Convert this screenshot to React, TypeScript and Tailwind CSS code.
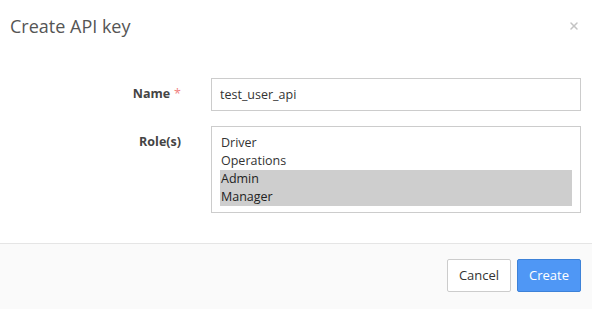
import { X } from 'lucide-react'

const roles = [
  { name: 'Driver', selected: false },
  { name: 'Operations', selected: false },
  { name: 'Admin', selected: true },
  { name: 'Manager', selected: true },
]

export default function App() {
  return (
    <div className="flex h-[309px] w-[592px] flex-col bg-white font-['Open_Sans',sans-serif] text-[#333]">
      <div className="flex h-[52px] items-center justify-between pl-[10px] pr-[12px]">
        <h2 className="text-[18px] font-normal text-[#555]">Create API key</h2>
        <X size={12} strokeWidth={3} className="text-[#c4c4c4]" />
      </div>

      <div className="grid flex-1 grid-cols-[181px_370px] content-start gap-x-[30px] gap-y-[15px] pt-[26px]">
        <label className="flex h-[33px] items-center justify-end text-[12.5px] font-bold text-[#444]">
          Name <span className="ml-[4px] font-normal text-[#f08080]">*</span>
        </label>
        <input
          readOnly
          value="test_user_api"
          className="h-[33px] border border-[#ccc] px-[8px] text-[12.5px] text-[#333] outline-none"
        />

        <label className="pt-[7px] text-right text-[12.5px] font-bold text-[#444]">Role(s)</label>
        <div className="h-[87px] border border-[#ccc] px-[8px] pt-[7px]">
          {roles.map((role) => (
            <div
              key={role.name}
              className={`h-[18px] pl-[1px] text-[12.5px] leading-[18px] ${role.selected ? 'bg-[#cecece] text-[#222]' : ''}`}
            >
              {role.name}
            </div>
          ))}
        </div>
      </div>

      <div className="flex h-[66px] items-start justify-end gap-[6px] border-t border-[#e5e5e5] bg-[#fafafa] pr-[11px] pt-[15px]">
        <button className="h-[33px] w-[64px] rounded-[2px] border border-[#ccc] bg-white text-[13px] text-[#333]">
          Cancel
        </button>
        <button className="h-[33px] w-[64px] rounded-[2px] border border-[#3d82d8] bg-[#4f97f5] text-[13px] text-white">
          Create
        </button>
      </div>
    </div>
  )
}
